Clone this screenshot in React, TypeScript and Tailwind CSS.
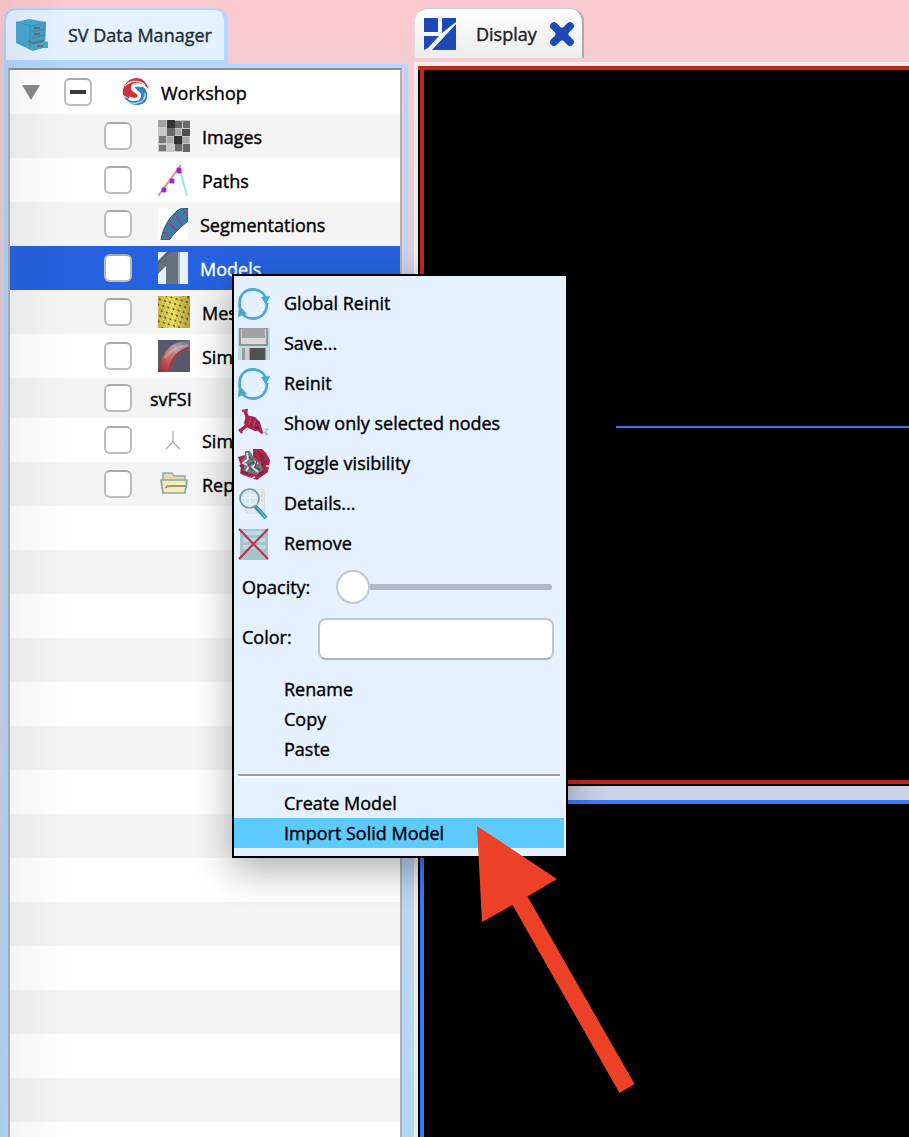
import type { ReactNode } from "react";

const CabinetIcon = () => (
  <svg className="h-8 w-8" viewBox="0 0 32 32">
    <path d="M0 3 13 0l17 3-1 19 3 1v6H27l-10 3L0 24z" fill="#4aa6cf" />
    <path d="M0 3 15 7l15-4M14 7v24" stroke="#3f9bc4" fill="none" />
    <path d="M14 7 29 4v17L14 25z" fill="#46a0c6" stroke="#3792ba" strokeWidth=".7" />
    <path d="M15 13l14-3M15 19l14-3" stroke="#388fb0" fill="none" />
    <path d="M18 9h6M18 15h6M12 22l5 2 10-2M21 27h6" stroke="#65707a" strokeWidth="1.8" fill="none" />
  </svg>
);

const DisplayIcon = () => (
  <svg className="h-8 w-8" viewBox="0 0 32 32">
    <path d="M0 0h14v14H0zM18 0h14v4L18 15zM0 18h15L4 30l-4 2zM32 6v26H8z" fill="#1d49b7" />
  </svg>
);

const CloseIcon = () => (
  <svg className="h-6 w-6" viewBox="0 0 24 24">
    <path d="M4 4 20 20M20 4 4 20" stroke="#1c49b5" strokeWidth="7.6" strokeLinecap="round" />
    <path d="M6 6h12v12H6z" fill="none" />
    <circle cx="12" cy="12" r="6.6" fill="#1c49b5" />
  </svg>
);

const WorkshopIcon = () => (
  <svg className="h-7 w-7" viewBox="0 0 28 28">
    <path d="M2 18C4 24 9 27 15 27c8 0 11-5 10-12-1-4-3-6-6-7l-7 1 5 5c5 4 0 8-5 7-5 0-8-1-11-3z" fill="#3186bf" />
    <path d="M1 19c3 5 8 7 14 6 6-1 9-5 8-10" fill="none" stroke="#dcebf6" strokeWidth="1.1" />
    <path d="M1 17C0 9 4 1 14 0c6 0 10 3 13 11l-5-4C17 4 12 5 11 8c0 4 7 5 7 9 0 5-9 6-17 0z" fill="#cf3236" />
    <path d="M3 8C8 2 18 2 23 7" fill="none" stroke="#fff" strokeWidth="1.1" />
    <path d="M20 8c-5-3-11-1-9 3 2 3 8 4 6 8-1 3-6 3-10 1" fill="none" stroke="#fff" strokeWidth="3.4" />
  </svg>
);

const ImagesIcon = () => (
  <svg className="h-8 w-8" viewBox="0 0 32 32">
    <path fill="#c8c8c8" d="M0 0h32v32H0z" />
    <path fill="#a2a2a2" d="M0 0h8v7H0z" />
    <path fill="#343434" d="M9 0h8v8H9z" />
    <path fill="#696969" d="M17 1h7v7h-7zM25 1h7v7h-7zM9 8h8v8H9zM25 24h7v8h-7zM17 24h7v7h-7z" />
    <path fill="#505050" d="M24 9h8v7h-8z" />
    <path fill="#a8a8a8" d="M17 9h6v6h-6zM9 17h6v6H9zM24 17h7v6h-7z" />
    <path fill="#777" d="M1 16h7v7H1zM1 25h7v6H1z" />
    <path fill="#303030" d="M16 16h8v8h-8z" />
  </svg>
);

const PathsIcon = () => (
  <svg className="h-8 w-8" viewBox="0 0 32 32">
    <path d="M22 6 29 32" stroke="#8be8da" strokeWidth="1.8" />
    <path d="M0 32 23 1" stroke="#f4817e" strokeWidth="1.9" fill="none" />
    <path d="M4 24h4v4H4zM12 15h4v4h-4zM19 4h4v5h-4z" fill="#942be0" stroke="#942be0" strokeWidth=".8" />
  </svg>
);

const SegmentationsIcon = () => (
  <svg className="h-8 w-[30px]" viewBox="0 0 30 32">
    <path fill="#fff" d="M0 0h30v32H0z" />
    <path d="M3 32C5 19 13 5 24 0h6v13C24 18 17 24 11 32z" fill="#397cad" stroke="#34516c" />
    <path d="M5 23l8 8M10 14l9 9M17 6l7 12M25 1l5 9" stroke="#a23f5c" strokeWidth="1.3" fill="none" />
  </svg>
);

const ModelsIcon = () => (
  <svg className="h-8 w-[30px]" viewBox="0 0 30 32">
    <path fill="#e5f1ff" d="M0 0h30v32H0z" />
    <path fill="#65727d" d="M8 32V14L0 22V9L9 0h11v32z" />
    <path fill="#4e5963" d="M9 0h3L0 13V9z" opacity=".65" />
    <path fill="#a1afba" d="M20 0h2v32h-2z" />
  </svg>
);

const MeshIcon = () => (
  <svg className="h-8 w-8" viewBox="0 0 32 32">
    <defs>
      <linearGradient id="meshGold" x2="1"><stop stopColor="#cbb944" /><stop offset=".45" stopColor="#fbef68" /><stop offset="1" stopColor="#b3a23a" /></linearGradient>
      <pattern id="meshLines" width="5.3" height="5.3" patternUnits="userSpaceOnUse" patternTransform="rotate(17)">
        <path d="M0 0 5.3 5.3M0 2.6h5.3M2.6 0v5.3" stroke="#958a35" strokeWidth=".5" /><path fill="#4e4919" d="M2 2h1.5v1.5H2z" />
      </pattern>
    </defs>
    <path fill="url(#meshGold)" d="M0 0h32v32H0z" /><path fill="url(#meshLines)" d="M0 0h32v32H0z" />
  </svg>
);

const SimulationIcon = () => (
  <svg className="h-8 w-8" viewBox="0 0 32 32">
    <defs>
      <linearGradient id="flow" x1="1" x2="0" y2="1"><stop stopColor="#6b687d" /><stop offset=".35" stopColor="#b3a0a8" /><stop offset=".58" stopColor="#c9705f" /><stop offset="1" stopColor="#94243c" /></linearGradient>
    </defs>
    <path fill="#555970" d="M0 0h32v32H0z" />
    <path d="M0 32C2 18 9 4 23 2l9-2v10C20 11 15 17 12 32z" fill="url(#flow)" />
    <path d="M7 18Q13 8 30 5" stroke="#dccbd0" strokeWidth="2.5" opacity=".4" fill="none" />
    <path d="M11 31C14 17 20 11 32 8" stroke="#a33847" strokeWidth="2.5" fill="none" />
  </svg>
);

const AxisIcon = () => (
  <svg className="h-8 w-8" viewBox="0 0 32 32"><path d="M15 7v11L8 25M15 18l7 7" stroke="#aaa" strokeWidth="1.2" fill="none" /></svg>
);

const FolderIcon = () => (
  <svg className="h-8 w-8" viewBox="0 0 32 32">
    <path d="M5 10V5h9l2 3h11v5H5z" fill="#e4dba9" stroke="#8eabbb" strokeWidth="1.5" />
    <path d="M3 12h26l-2 13H5z" fill="#fcecac" stroke="#85a5b6" strokeWidth="1.7" strokeLinejoin="round" />
    <path d="M8 20q0-2 4-2h15" fill="none" stroke="#8399a1" strokeWidth="1.8" />
  </svg>
);

const ReinitIcon = () => (
  <svg className="h-8 w-8" viewBox="0 0 32 32">
    <path d="M2 20C0 8 6 1.5 15 1.5c7 0 12 4 13 10M29 15c0 9-5 15.5-14 15.5C9 30.500 4 27 2 22" fill="none" stroke="#4cadd1" strokeWidth="2.8" />
    <path d="M23 9l9-1-4 9zM0 29l1-12 8 9z" fill="#45abd0" />
  </svg>
);

const SaveIcon = () => (
  <svg className="h-8 w-8" viewBox="0 0 32 32">
    <path fill="#b8dee4" d="M0 0h32v32H0z" />
    <path fill="#929292" d="M1 0h29v18H1z" />
    <path fill="#d8d8d8" d="M3 1h25v15H3z" /><path fill="#a2a2a2" d="M4 0h23v10H4z" />
    <path fill="#999" d="M4 20h24v12H4z" />
    <path fill="#ccc" d="M7 20h4v12H7z" /><path fill="#505050" d="M12 20h15v12H12z" />
  </svg>
);

const NodesIcon = () => (
  <svg className="h-8 w-8" viewBox="0 0 32 32" fill="none">
    <path d="M8 7l9 2 5 5 2 8-7 1-9-4-2-4z" fill="#a92348" />
    <path d="M7 2l2 7M8 18l-6 5M19 20l6 5" stroke="#a92348" strokeWidth="3.4" />
    <path d="M4 3l6-1M1 21l3 4" stroke="#bd2a50" strokeWidth="2.6" />
    <path d="M11 11l4 1M17 12l3 3M11 16l4 2M17 19l4 1" stroke="#603344" strokeWidth="1.8" />
    <path d="M13 9l-2 8M18 11l-3 8" stroke="#cf3a60" strokeWidth="1.3" />
    <path d="M25 24l5-3M27 23l2 4" stroke="#bfb8c0" strokeWidth="2.6" />
    <path d="M25 24l3-2" stroke="#fff" strokeWidth="1.4" />
  </svg>
);

const ToggleIcon = () => (
  <svg className="h-8 w-8" viewBox="0 0 32 32" fill="none">
    <path d="M15 1l9 0 4 4 4 7-2 12-7 5-4 3-8-3-9-3 1-8-3-9 7-2 8 3z" fill="#ad2349" />
    <path d="M7 3l5 0 4 7 6 4 3 8-6 5-7-2-7-3 2-8-4-1 4-4z" fill="#74757c" />
    <path d="M9 5l1 6-5 4 6 3-3 5M13 12l6 3-5 4 6 5" stroke="#dddde0" strokeWidth="1.8" />
    <path d="M11 9l5 5-6 3 5 6M19 13l-2 6 5 3" stroke="#494d54" strokeWidth="1.4" />
    <path d="M20 5l5 3-2 5M27 13l-3 5M5 24l5 2M21 26l5-3M2 17l3 4" stroke="#5d3041" strokeWidth="1.7" />
    <path d="M28 18l3 0M1 26l3 1M14 30l3-1M13 3l2 1" stroke="#e5f1ff" strokeWidth="1.5" />
  </svg>
);

const DetailsIcon = () => (
  <svg className="h-8 w-8" viewBox="0 0 32 32" fill="none">
    <path d="M7 2l19-1 1 24H8z" fill="#e9ebeb" stroke="#d4d7d8" />
    <path d="M24 3v6M24 11v3" stroke="#c8caca" />
    <path d="M17 18 28 30" stroke="#348db3" strokeWidth="4" /><path d="M19 19 28 30" stroke="#62b2d1" strokeWidth="1.4" />
    <circle cx="11.500" cy="10.5" r="9.5" fill="#cfe4ec" fillOpacity=".9" stroke="#6f9aaa" strokeWidth="1.7" />
    <path d="M7 7h11v9H8zM12 2v17M4 10h15" stroke="#edf8fb" strokeWidth="1.5" opacity=".8" />
  </svg>
);

const RemoveIcon = () => (
  <svg className="h-8 w-8" viewBox="0 0 32 32">
    <path fill="#a4c5ca" d="M2 1h28v31H2z" />
    <path fill="#b7dbe0" d="M5 3h22v4H5zM5 10h22v4H5zM5 17h22v4H5z" />
    <path d="M1 1l29 30M30 1 1 31" stroke="#c13058" strokeWidth="2.2" />
  </svg>
);

const Check = ({ minus = false }: { minus?: boolean }) => (
  <span className="flex h-7 w-7 shrink-0 items-center justify-center rounded-[6px] border-2 border-[#bcbcbc] border-t-[#a9a9a9] bg-white">
    {minus && <span className="h-1 w-4 bg-[#383838]" />}
  </span>
);

type TreeItem = { label: string; icon?: ReactNode; row: string; text: string };

const tree: TreeItem[] = [
  { label: "Images", icon: <ImagesIcon />, row: "h-11 bg-[#f4f4f4]", text: "ml-3" },
  { label: "Paths", icon: <PathsIcon />, row: "h-11 bg-white", text: "ml-3" },
  { label: "Segmentations", icon: <SegmentationsIcon />, row: "h-11 bg-[#f4f4f4]", text: "ml-3" },
  { label: "Models", icon: <ModelsIcon />, row: "h-11 bg-[#2662df] text-white", text: "ml-3" },
  { label: "Meshes", icon: <MeshIcon />, row: "h-11 bg-[#f4f4f4]", text: "ml-3" },
  { label: "Simulations", icon: <SimulationIcon />, row: "h-11 bg-white", text: "ml-3" },
  { label: "svFSI", row: "h-10 bg-[#f4f4f4]", text: "-ml-2" },
  { label: "Simulations1d", icon: <AxisIcon />, row: "h-11 bg-white", text: "ml-3" },
  { label: "Repository", icon: <FolderIcon />, row: "h-11 bg-[#f4f4f4]", text: "ml-3" },
];

const actions: { label: string; icon: ReactNode }[] = [
  { label: "Global Reinit", icon: <ReinitIcon /> },
  { label: "Save...", icon: <SaveIcon /> },
  { label: "Reinit", icon: <ReinitIcon /> },
  { label: "Show only selected nodes", icon: <NodesIcon /> },
  { label: "Toggle visibility", icon: <ToggleIcon /> },
  { label: "Details...", icon: <DetailsIcon /> },
  { label: "Remove", icon: <RemoveIcon /> },
];

const DataManager = () => (
  <section className="flex w-[404px] shrink-0 flex-col pt-2">
    <div className="flex h-14 w-56 shrink-0 items-center rounded-t-[12px] border-2 border-r-4 border-b-4 border-[#b1d6ff] bg-[#e5f1ff] pl-2.5 text-[#222b35]">
      <CabinetIcon />
      <span className="ml-5 whitespace-nowrap">SV Data Manager</span>
    </div>
    <div className="flex min-h-0 grow border-x-4 border-t-4 border-[#b1d6ff]">
      <div className="mr-0.5 grow overflow-hidden border-x-2 border-t-2 border-x-[#b0b0b0] border-t-[#8e8e8e] bg-white">
        <div className="flex h-11 items-center pl-3">
          <span className="mr-6 h-0 w-0 border-x-[9px] border-t-[15px] border-x-transparent border-t-[#888]" />
          <Check minus />
          <span className="ml-[30px]"><WorkshopIcon /></span>
          <span className="ml-[11px] pt-0.5">Workshop</span>
        </div>
        {tree.map((item) => (
          <div key={item.label} className={`flex items-center pl-[94px] ${item.row}`}>
            <Check />
            <span className="ml-[26px]">{item.icon}</span>
            <span className={`pt-0.5 whitespace-nowrap ${item.text}`}>{item.label}</span>
          </div>
        ))}
        {Array.from({ length: 15 }, (_, i) => (
          <div key={i} className="h-11 odd:bg-white even:bg-[#f4f4f4]" />
        ))}
      </div>
    </div>
  </section>
);

const Display = () => (
  <section className="ml-1.5 flex min-w-0 grow flex-col pt-2">
    <div className="flex h-[50px] w-[170px] shrink-0 items-center rounded-t-[14px] border-t border-r-2 border-l border-t-[#ccc] border-r-[#aaa] border-l-[#ddd] bg-linear-to-b from-white to-[#ececec] pl-[9px] text-[#222]">
      <DisplayIcon />
      <span className="ml-5">Display</span>
      <span className="ml-[13px]"><CloseIcon /></span>
    </div>
    <div className="mt-1 flex min-h-0 grow flex-col border-t-4 border-l-4 border-[#ececec]">
      <div className="flex h-[720px] shrink-0 bg-black pb-0.5">
        <div className="ml-0.5 grow border-y-4 border-l-4 border-[#c3271b] bg-black pt-[356px] pl-48">
          <div className="h-0.5 bg-[#3979e8]" />
        </div>
        <div className="absolute top-[66px] left-[418px] h-1 w-0.5 bg-[#c3271b]" />
      </div>
      <div className="h-3.5 shrink-0 bg-[#c8d3e7]" />
      <div className="flex grow bg-black">
        <div className="ml-0.5 grow border-t-4 border-l-4 border-[#347dfb]" />
      </div>
    </div>
  </section>
);

const MenuItem = ({ label, active = false }: { label: string; active?: boolean }) => (
  <div className={active ? "mr-0.5 flex h-[30px] items-center bg-[#5dcbff] pl-[50px]" : "flex h-[30px] items-center pl-[50px]"}>{label}</div>
);

const ContextMenu = () => (
  <div className="absolute top-[274px] left-[232px] flex h-[584px] w-[336px] flex-col border-2 border-black bg-[#e5f1ff] pt-2 shadow-[0_12px_36px_rgba(0,0,0,0.32)]">
    {actions.map((action) => (
      <div key={action.label} className="flex h-10 shrink-0 items-center pl-1 whitespace-nowrap">
        {action.icon}
        <span className="ml-3.5 pb-0.5">{action.label}</span>
      </div>
    ))}
    <div className="flex h-[46px] shrink-0 items-center pl-2">
      <span className="w-[94px]">Opacity:</span>
      <span className="flex h-8 w-[216px] items-center">
        <span className="h-[34px] w-[34px] shrink-0 rounded-full border-2 border-[#bdc8d3] bg-white" />
        <span className="h-1.5 grow rounded-r-full bg-[#b0bac5]" />
      </span>
    </div>
    <div className="flex h-16 shrink-0 items-start pt-2 pl-2">
      <span className="w-[76px] pt-[7px]">Color:</span>
      <span className="h-[42px] w-[236px] rounded-[8px] border-2 border-[#bdc8d3] border-b-[#abb5c0] bg-white" />
    </div>
    <MenuItem label="Rename" />
    <MenuItem label="Copy" />
    <MenuItem label="Paste" />
    <div className="mt-2.5 mr-1.5 mb-2.5 ml-1 h-1 shrink-0 border-t-2 border-[#98a2ac] bg-white" />
    <MenuItem label="Create Model" />
    <MenuItem label="Import Solid Model" active />
  </div>
);

export default function App() {
  return (
    <main className="relative flex h-[1137px] w-[909px] overflow-hidden bg-[linear-gradient(to_bottom,#fccace_0px,#f2ccd3_90px,#d9cedb_450px,#c6d3e6_790px,#b2d8ef_1137px)] pl-1 font-['Open_Sans','Noto_Sans',sans-serif] text-[18px] leading-6 font-medium text-black [-webkit-text-stroke:0.4px]">
      <DataManager />
      <Display />
      <div className="pointer-events-none absolute inset-y-0 left-0 w-[70px] bg-linear-to-r from-black/5 to-transparent" />
      <ContextMenu />
      <svg className="pointer-events-none absolute top-0 left-0 h-full w-full" viewBox="0 0 909 1137">
        <path d="M477 826 557 879 527.5 896.5 634.5 1084 619.5 1093 512.5 905 482 922z" fill="#ed4227" />
      </svg>
    </main>
  );
}
